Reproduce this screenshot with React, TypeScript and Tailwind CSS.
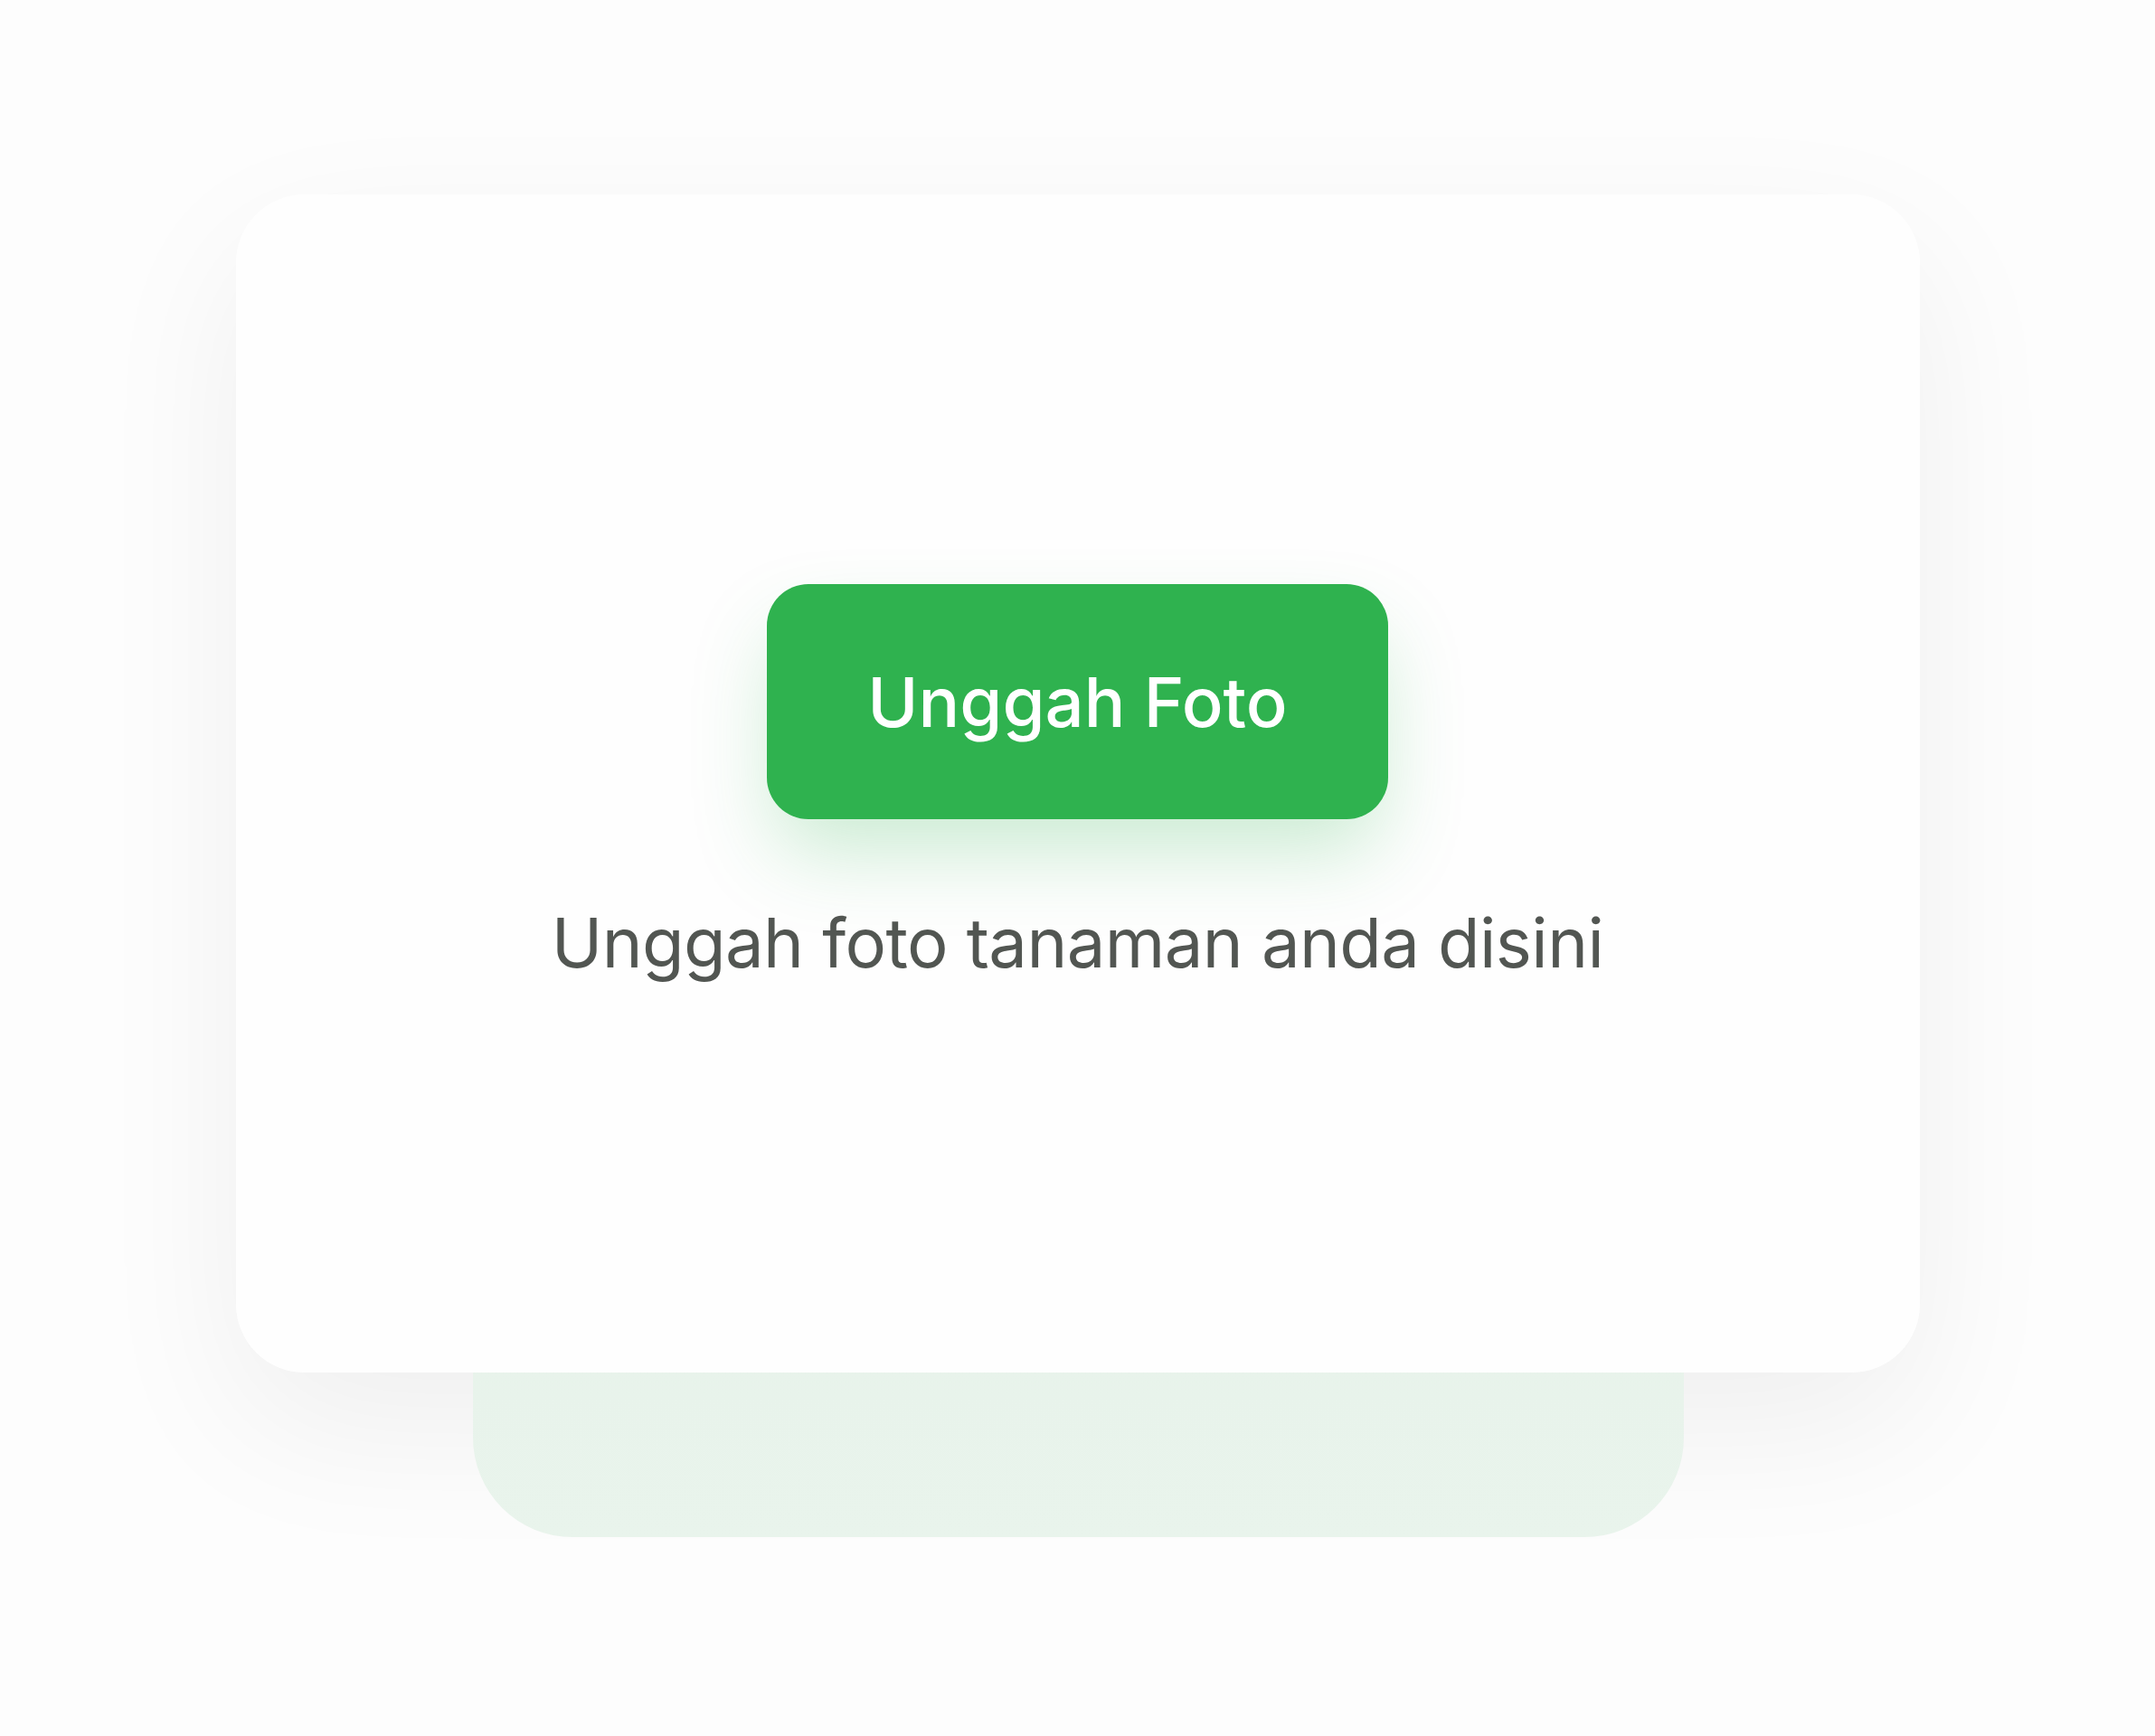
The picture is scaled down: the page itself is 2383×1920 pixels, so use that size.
export default function App() {
  return (
    <div className="min-h-screen w-full bg-[#fdfdfd] flex justify-center pt-[215px] font-['Inter','Noto_Sans',sans-serif]">
      <div className="relative w-[1862px] h-[1303px] rounded-[76px] shadow-[0_60px_170px_rgba(0,0,0,0.06)]">
        {/* tinted plate peeking out under the card */}
        <div className="absolute left-[262px] right-[261px] top-[200px] bottom-[-182px] rounded-[110px] bg-gradient-to-b from-[#e1ede4] to-[#e9f4ec]" />

        <div className="relative flex h-full w-full flex-col items-center justify-center rounded-[76px] bg-[#fefefe]">
          <button className="flex h-[260px] w-[687px] items-center justify-center rounded-[46px] bg-[#2fb24f] text-[76px] font-medium text-white shadow-[0_45px_90px_-10px_rgba(47,178,79,0.25)]">
            Unggah Foto
          </button>
          <p className="mt-[90px] text-[76px] leading-[92px] tracking-[-0.6px] text-[#525652]">
            Unggah foto tanaman anda disini
          </p>
        </div>
      </div>
    </div>
  );
}
